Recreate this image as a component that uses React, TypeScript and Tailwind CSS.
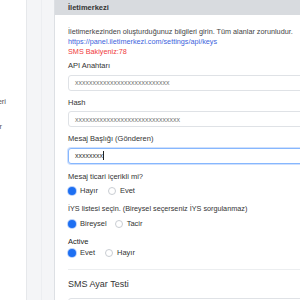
import React from "react";

const font = "font-['Liberation_Sans','Helvetica',Arial,sans-serif]";

function Radio({ label, checked }: { label: string; checked?: boolean }) {
  return (
    <label className="flex items-center gap-[4px]">
      {checked ? (
        <span className="w-[8px] h-[8px] rounded-full bg-[#1d6ff2] ring-1 ring-[#b9d1fb]" />
      ) : (
        <span className="w-[8px] h-[8px] rounded-full border border-[#c9cdd2] bg-white" />
      )}
      <span className="text-[7.5px] leading-[10px] text-[#333]">{label}</span>
    </label>
  );
}

function Field({
  label,
  value,
  focused,
  top,
}: {
  label: string;
  value: string;
  focused?: boolean;
  top: string;
}) {
  return (
    <div className={top}>
      <div className="text-[7.5px] leading-[10px] text-[#333]">{label}</div>
      <div
        className={[
          "mt-[3.5px] h-[16px] flex items-center px-[6px] rounded-[3px] bg-white border",
          focused ? "border-[#86b7fe] ring-1 ring-[#cfe0fd]" : "border-[#dfe2e6]",
        ].join(" ")}
      >
        <span className={["text-[7px] leading-none", focused ? "text-[#333]" : "text-[#777]"].join(" ")}>{value}</span>
        {focused && <span className="w-px h-[9px] bg-[#222]" />}
      </div>
    </div>
  );
}

export default function App() {
  return (
    <div className={`w-[300px] h-[300px] overflow-hidden flex bg-[#f4f5f7] ${font}`}>
      {/* Sidebar (scrolled, mostly clipped) */}
      <aside className="w-[27px] shrink-0 bg-white border-r border-[#e6e8eb] overflow-hidden">
        <div className="flex flex-col items-end pt-[97px] gap-[15px]">
          <span className="pr-[20px] text-[7.5px] leading-[10px] text-[#555] whitespace-nowrap">Bildirimleri</span>
          <span className="pr-[24px] text-[7.5px] leading-[10px] text-[#555] whitespace-nowrap">Diğer</span>
        </div>
      </aside>

      {/* Content */}
      <div className="flex-1 pl-[14px] min-w-0">
        <div className="h-full border-l border-[#eceef1] pl-[12px]">
          <div className="w-[300px] h-full bg-white border-l border-[#dde0e4]">
            <div className="h-[15px] bg-[#d8dbdf] flex items-center px-[13px]">
              <span className="text-[7.5px] font-bold text-[#333]">İletimerkezi</span>
            </div>

            <div className="px-[13px] pt-[12px]">
              <p className="text-[7.25px] leading-[10px] text-[#444] whitespace-nowrap">
                İletimerkezinden oluşturduğunuz bilgileri girin. Tüm alanlar zorunludur.
              </p>
              <p className="text-[7.25px] leading-[10px] text-[#3d63dd]">https://panel.iletimerkezi.com/settings/api/keys</p>
              <p className="text-[7.25px] leading-[10px] text-[#f03a3a]">SMS Bakiyeniz:78</p>

              <Field top="mt-[4px]" label="API Anahtarı" value="xxxxxxxxxxxxxxxxxxxxxxxxxxx" />
              <Field top="mt-[7px]" label="Hash" value="xxxxxxxxxxxxxxxxxxxxxxxxxxxxxx" />
              <Field top="mt-[7px]" label="Mesaj Başlığı (Gönderen)" value="xxxxxxxx" focused />

              <div className="mt-[8px] text-[7.5px] leading-[10px] text-[#333]">Mesaj ticari içerikli mi?</div>
              <div className="mt-[4px] flex items-center gap-[10px]">
                <Radio label="Hayır" checked />
                <Radio label="Evet" />
              </div>

              <div className="mt-[8px] text-[7.25px] leading-[10px] text-[#333] whitespace-nowrap">
                İYS listesi seçin. (Bireysel seçerseniz İYS sorgulanmaz)
              </div>
              <div className="mt-[5px] flex items-center gap-[8px]">
                <Radio label="Bireysel" checked />
                <Radio label="Tacir" />
              </div>

              <div className="mt-[8px] text-[7.5px] leading-[10px] text-[#222]">Active</div>
              <div className="mt-[1px] flex items-center gap-[10px]">
                <Radio label="Evet" checked />
                <Radio label="Hayır" />
              </div>

              <div className="mt-[11px] border-t border-[#eceef0]" />

              <div className="mt-[8px] text-[9px] leading-[12px] text-[#333]">SMS Ayar Testi</div>
              <div className="mt-[8px] h-[16px] rounded-[3px] border border-[#dfe2e6]" />
            </div>
          </div>
        </div>
      </div>
    </div>
  );
}
